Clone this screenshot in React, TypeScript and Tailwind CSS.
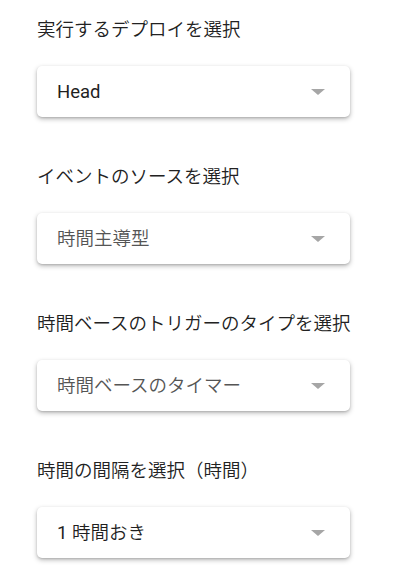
import React from "react";

const font = { fontFamily: 'Roboto, "Noto Sans CJK JP", sans-serif' };

function Select({ value, muted }: { value: React.ReactNode; muted?: boolean }) {
  return (
    <div className="mt-6 flex h-[51px] w-[313px] items-center justify-between rounded-[5px] bg-white pl-5 pr-[25px] shadow-[0_2px_5px_rgba(0,0,0,0.28),0_1px_2px_rgba(0,0,0,0.12)]">
      <span className={"text-[18.5px] font-[350] leading-6 " + (muted ? "text-[#555555]" : "text-[#1f1f1f]")}>{value}</span>
      <span className="h-0 w-0 border-x-[7px] border-t-[6px] border-x-transparent border-t-[#a6a6a6]" />
    </div>
  );
}

function Section({ label, value, muted }: { label: string; value: React.ReactNode; muted?: boolean }) {
  return (
    <div className="flex flex-col">
      <div className="h-6 whitespace-nowrap text-[18.5px] font-[350] leading-6 text-[#222222]">{label}</div>
      <Select value={value} muted={muted} />
    </div>
  );
}

export default function App() {
  return (
    <div className="min-h-[588px] w-[394px] bg-white pl-[37px] pt-[18px]" style={font}>
      <div className="flex flex-col gap-[48px]">
        <Section label="実行するデプロイを選択" value={<span className="font-normal">Head</span>} />
        <Section label="イベントのソースを選択" value="時間主導型" muted />
        <Section label="時間ベースのトリガーのタイプを選択" value="時間ベースのタイマー" muted />
        <Section
          label="時間の間隔を選択（時間）"
          value={
            <>
              <span className="font-normal">1</span> 時間おき
            </>
          }
        />
      </div>
    </div>
  );
}
